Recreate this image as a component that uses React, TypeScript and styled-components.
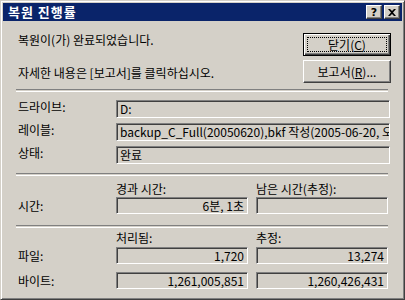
import React from 'react';
import styled, { createGlobalStyle, css } from 'styled-components';

const FACE = '#d4d0c8';
const SHADOW = '#808080';
const DARK = '#404040';

const GlobalStyle = createGlobalStyle`
  html, body {
    margin: 0;
    padding: 0;
    background: ${FACE};
  }
  body {
    font-family: "Noto Sans CJK KR", "Liberation Sans", sans-serif;
    font-size: 12px;
    color: #000;
  }
`;

const Window = styled.div`
  width: 405px;
  height: 300px;
  box-sizing: border-box;
  background: ${FACE};
  border: 1px solid;
  border-color: ${FACE} ${DARK} ${DARK} ${FACE};
  box-shadow: inset 1px 1px #fff, inset -1px -1px ${SHADOW};
  padding: 2px;
  display: flex;
  flex-direction: column;
`;

const TitleBar = styled.div`
  height: 18px;
  background: #0a246a;
  display: flex;
  align-items: center;
  padding: 0 2px 0 5px;
`;

const Title = styled.div`
  flex: 1;
  color: #fff;
  font-weight: bold;
  font-size: 13px;
  line-height: 18px;
  letter-spacing: 1px;
`;

const CaptionButtons = styled.div`
  display: flex;
  gap: 2px;
`;

const raised = css`
  background: ${FACE};
  border: 1px solid;
  border-color: #fff ${DARK} ${DARK} #fff;
  box-shadow: inset -1px -1px ${SHADOW};
`;

const CaptionButton = styled.div`
  ${raised};
  width: 16px;
  height: 14px;
  box-sizing: border-box;
  display: flex;
  align-items: center;
  justify-content: center;
  font-family: "DejaVu Sans", sans-serif;
  font-weight: bold;
  font-size: 11px;
  line-height: 1;
`;

const Content = styled.div`
  flex: 1;
  padding: 0 12px 0 15px;
  display: flex;
  flex-direction: column;
`;

const TopRow = styled.div`
  margin-top: 12px;
  height: 50px;
  display: flex;
`;

const Messages = styled.div`
  flex: 1;
  display: flex;
  flex-direction: column;
`;

const Message = styled.div<{ $gap?: number }>`
  line-height: 14px;
  margin-top: ${(p) => p.$gap ?? 0}px;
  white-space: nowrap;
`;

const Buttons = styled.div`
  display: flex;
  flex-direction: column;
  gap: 4px;
  margin-right: -1px;
`;

const PushButton = styled.div<{ $default?: boolean }>`
  position: relative;
  width: 88px;
  height: 23px;
  box-sizing: border-box;
  display: flex;
  align-items: center;
  justify-content: center;
  line-height: 14px;
  ${raised};
  ${(p) =>
    p.$default &&
    css`
      border: 1px solid #000;
      box-shadow: inset 1px 1px #fff, inset -1px -1px ${DARK}, inset -2px -2px ${SHADOW};
      &::after {
        content: '';
        position: absolute;
        inset: 3px;
        border: 1px dotted #000;
      }
    `}
`;

const Separator = styled.div<{ $top: number }>`
  margin: ${(p) => p.$top}px 2px 0 -2px;
  height: 1px;
  border-top: 1px solid ${SHADOW};
  border-bottom: 1px solid #fff;
`;

const InfoGrid = styled.div`
  margin-top: 8px;
  display: grid;
  grid-template-columns: 98px 1fr;
  grid-auto-rows: 18px;
  row-gap: 5px;
`;

const Label = styled.div<{ $center?: boolean }>`
  line-height: 14px;
  white-space: nowrap;
  align-self: ${(p) => (p.$center ? 'center' : 'start')};
`;

const Field = styled.div<{ $right?: boolean; $h?: number }>`
  height: ${(p) => p.$h ?? 18}px;
  box-sizing: border-box;
  background: ${FACE};
  border: 1px solid;
  border-color: ${SHADOW} #fff #fff ${SHADOW};
  box-shadow: inset 1px 1px ${DARK}, inset -1px -1px ${FACE};
  padding: 0 3px 0 3px;
  line-height: ${(p) => (p.$h ?? 18) - 2}px;
  white-space: nowrap;
  overflow: hidden;
  text-align: ${(p) => (p.$right ? 'right' : 'left')};
`;

const StatGrid = styled.div<{ $top: number; $fieldGap: number }>`
  margin-top: ${(p) => p.$top}px;
  display: grid;
  grid-template-columns: 90px 132px 132px;
  column-gap: 8px;
  row-gap: ${(p) => p.$fieldGap}px;
  align-items: center;
`;

const Header = styled.div<{ $col: number }>`
  grid-column: ${(p) => p.$col};
  line-height: 14px;
  white-space: nowrap;
`;

export default function App() {
  return (
    <>
      <GlobalStyle />
      <Window>
        <TitleBar>
          <Title>복원 진행률</Title>
          <CaptionButtons>
            <CaptionButton>?</CaptionButton>
            <CaptionButton>
              <svg width="8" height="7" viewBox="0 0 8 7">
                <path d="M0 0h2l2 2 2-2h2L5 3.5 8 7H6L4 5 2 7H0l3-3.5z" fill="#000" />
              </svg>
            </CaptionButton>
          </CaptionButtons>
        </TitleBar>
        <Content>
          <TopRow>
            <Messages>
              <Message>복원이(가) 완료되었습니다.</Message>
              <Message $gap={19}>자세한 내용은 [보고서]를 클릭하십시오.</Message>
            </Messages>
            <Buttons>
              <PushButton $default>
                닫기(<u>C</u>)
              </PushButton>
              <PushButton>
                보고서(<u>R</u>)...
              </PushButton>
            </Buttons>
          </TopRow>
          <Separator $top={6} />
          <InfoGrid>
            <Label>드라이브:</Label>
            <Field>D:</Field>
            <Label>레이블:</Label>
            <Field>backup_C_Full(20050620),bkf 작성(2005-06-20, 오전 10:21)</Field>
            <Label>상태:</Label>
            <Field>완료</Field>
          </InfoGrid>
          <Separator $top={9} />
          <StatGrid $top={6} $fieldGap={1}>
            <Header $col={2}>경과 시간:</Header>
            <Header $col={3}>남은 시간(추정):</Header>
            <Label $center>시간:</Label>
            <Field $right $h={17}>6분, 1초</Field>
            <Field $h={17} />
          </StatGrid>
          <Separator $top={11} />
          <StatGrid $top={3} $fieldGap={2}>
            <Header $col={2}>처리됨:</Header>
            <Header $col={3}>추정:</Header>
            <Label $center>파일:</Label>
            <Field $right $h={17}>1,720</Field>
            <Field $right $h={17}>13,274</Field>
          </StatGrid>
          <StatGrid $top={8} $fieldGap={0}>
            <Label $center>바이트:</Label>
            <Field $right $h={17}>1,261,005,851</Field>
            <Field $right $h={17}>1,260,426,431</Field>
          </StatGrid>
        </Content>
      </Window>
    </>
  );
}
